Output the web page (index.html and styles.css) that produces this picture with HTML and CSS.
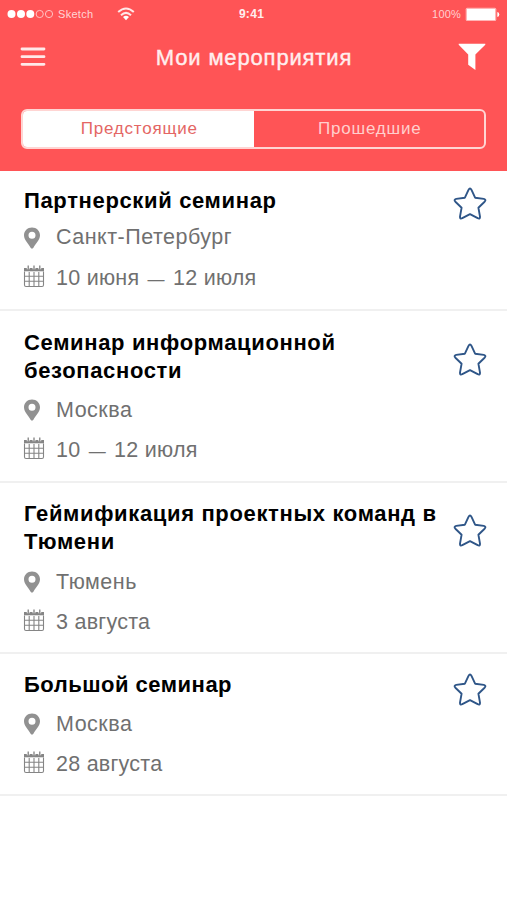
FILE: index.html
```html
<!DOCTYPE html>
<html lang="ru">
<head>
    <meta charset="UTF-8">
    <meta name="viewport" content="width=device-width, initial-scale=1.0">
    <title>Мои мероприятия</title>
    <link rel="stylesheet" href="styles.css">
</head>
<body>
    <!-- shared icons -->
    <svg width="0" height="0" class="sprite">
        <symbol id="pin" viewBox="0 0 18 22">
            <path fill-rule="evenodd" d="M9 0.5C4.4 0.5 1 4 1 8.3C1 13.5 5.6 16.5 7.6 20.8C8 21.9 10 21.9 10.4 20.8C12.4 16.5 17 13.5 17 8.3C17 4 13.6 0.5 9 0.5ZM9 4.7A3.5 3.5 0 1 1 9 11.7A3.5 3.5 0 1 1 9 4.7Z"/>
        </symbol>
        <symbol id="calendar" viewBox="0 0 22 23">
            <path d="M1.5 6.5V20a1.5 1.5 0 0 0 1.5 1.5H19a1.5 1.5 0 0 0 1.5-1.5V6.5M1.5 11.3H20.5M1.5 16.2H20.5M6.2 7V21.5M11 7V21.5M15.8 7V21.5" fill="none" stroke="#858585" stroke-width="1.1"/>
            <path d="M1 3H21V6.3H1Z" fill="#858585"/>
            <path d="M5.2 .8V4.3M16.8 .8V4.3M11 .8V4.3" stroke="#fff" stroke-width="2.8"/>
            <path d="M5.2 .5V4.5M11 .5V4.5M16.8 .5V4.5" stroke="#777" stroke-width="1.2"/>
        </symbol>
        <symbol id="star" viewBox="0 0 36 36">
            <path d="M16.5 3.9Q18 1.1 19.5 3.9L23.1 11.7L31.8 12.9Q34.6 13.6 32.6 15.7L26.4 21.7L28 30.7Q28.2 33.3 25.7 32.2L18 28.1L10.3 32.2Q7.8 33.3 8 30.7L9.6 21.7L3.4 15.7Q1.4 13.6 4.2 12.9L12.9 11.7Z" fill="none" stroke="#2f5688" stroke-width="1.9" stroke-linejoin="round"/>
        </symbol>
    </svg>

    <header class="header">
        <div class="status-bar">
            <div class="status-left">
                <svg class="signal" width="46" height="10" viewBox="0 0 46 10">
                    <g fill="#fff"><circle cx="4.5" cy="5" r="4"/><circle cx="14" cy="5" r="4"/><circle cx="23.3" cy="5" r="4"/></g>
                    <g fill="none" stroke="#ffc3c3"><circle cx="32.7" cy="5" r="3.6"/><circle cx="42" cy="5" r="3.6"/></g>
                </svg>
                <span class="carrier">Sketch</span>
                <svg class="wifi" width="18" height="14" viewBox="0 0 18 14">
                    <path d="M1.2 5Q9-2 16.8 5M4 8.2Q9 3.5 14 8.2" fill="none" stroke="#ffe8e8" stroke-width="2"/>
                    <path d="M6 10.1Q9 7.6 12 10.1L9 13.3Z" fill="#fff"/>
                </svg>
            </div>
            <div class="time">9:41</div>
            <div class="status-right">
                <span class="percent">100%</span>
                <svg width="35" height="15" viewBox="0 0 35 15">
                    <rect x=".7" y=".7" width="30.6" height="13.4" rx="1.5" fill="#ffb5b5"/>
                    <rect x="2" y="2" width="28" height="11" fill="#fff"/>
                    <path d="M32.3 5Q34.3 5.2 34.3 7.5T32.3 10Z" fill="#fff"/>
                </svg>
            </div>
        </div>
        <div class="nav-bar">
            <svg class="menu" width="26" height="22" viewBox="0 0 26 22">
                <path d="M2 3H24M2 10.7H24M2 18.3H24" stroke="#ffe9e9" stroke-width="2.8" stroke-linecap="round"/>
            </svg>
            <h1>Мои мероприятия</h1>
            <svg class="filter" width="28" height="28" viewBox="0 0 28 28">
                <path d="M.7.7H27.3V1.8L17.4 11.6V27L10.2 21.7V11.6L.7 1.8Z" fill="#fff"/>
            </svg>
        </div>
        <div class="tabs">
            <div class="tab active">Предстоящие</div>
            <div class="tab">Прошедшие</div>
        </div>
    </header>

    <main class="events">
        <div class="event first">
            <div class="event-head">
                <h2>Партнерский семинар</h2>
                <svg class="star"><use href="#star"/></svg>
            </div>
            <div class="row place"><svg class="pin"><use href="#pin"/></svg><span>Санкт-Петербург</span></div>
            <div class="row date"><svg class="calendar"><use href="#calendar"/></svg><span>10 июня <span class="dash">—</span> 12 июля</span></div>
        </div>
        <div class="event second">
            <div class="event-head">
                <h2>Семинар информационной безопасности</h2>
                <svg class="star"><use href="#star"/></svg>
            </div>
            <div class="row place"><svg class="pin"><use href="#pin"/></svg><span>Москва</span></div>
            <div class="row date"><svg class="calendar"><use href="#calendar"/></svg><span>10 <span class="dash">—</span> 12 июля</span></div>
        </div>
        <div class="event third">
            <div class="event-head">
                <h2>Геймификация проектных команд в Тюмени</h2>
                <svg class="star"><use href="#star"/></svg>
            </div>
            <div class="row place"><svg class="pin"><use href="#pin"/></svg><span>Тюмень</span></div>
            <div class="row date"><svg class="calendar"><use href="#calendar"/></svg><span>3 августа</span></div>
        </div>
        <div class="event last">
            <div class="event-head">
                <h2>Большой семинар</h2>
                <svg class="star"><use href="#star"/></svg>
            </div>
            <div class="row place"><svg class="pin"><use href="#pin"/></svg><span>Москва</span></div>
            <div class="row date"><svg class="calendar"><use href="#calendar"/></svg><span>28 августа</span></div>
        </div>
    </main>
</body>
</html>
```
FILE: styles.css
```css
* {
    box-sizing: border-box;
}
body {
    margin: 0;
    font-family: 'Liberation Sans', Arial, sans-serif;
    background-color: #fff;
    color: #000;
}
svg {
    display: block;
    flex-shrink: 0;
}
.sprite {
    position: absolute;
}
.header {
    height: 171px;
    background-color: #ff5456;
    color: #fff;
}
.status-bar {
    height: 28px;
    padding: 0 7px;
    display: grid;
    grid-template-columns: 1fr auto 1fr;
    align-items: center;
    font-size: 11px;
}
.status-left,
.status-right {
    display: flex;
    align-items: center;
}
.status-right {
    justify-content: flex-end;
    gap: 4px;
}
.carrier {
    margin-left: 5px;
    color: #ffd5d5;
    letter-spacing: 0.3px;
}
.wifi {
    margin-left: 24px;
}
.time {
    margin-right: 4px;
    font-size: 12px;
    font-weight: bold;
    letter-spacing: 0.3px;
    color: #ffeeee;
}
.percent {
    color: #ffd0d0;
    letter-spacing: 0.2px;
}
.nav-bar {
    height: 58px;
    padding: 0 21px 0 20px;
    display: flex;
    align-items: center;
    justify-content: space-between;
}
.nav-bar h1 {
    margin: 0;
    padding: 2px 0 0 4px;
    font-size: 22px;
    font-weight: normal;
    color: #ffeeee;
    letter-spacing: 0.85px;
    -webkit-text-stroke: 0.4px #ffeeee;
}
.tabs {
    height: 40px;
    margin: 23px 21px 0;
    display: flex;
    border: 2px solid #ffd5d3;
    border-radius: 6px;
    overflow: hidden;
}
.tab {
    width: 50%;
    padding-left: 2px;
    display: flex;
    align-items: center;
    justify-content: center;
    font-size: 17px;
    letter-spacing: 0.8px;
    color: #ffcfcd;
}
.tab.active {
    background-color: #fff;
    color: #e46664;
}
.event {
    height: 171px;
    padding: 18px 19px 0 24px;
    border-bottom: 2px solid #f0f0f0;
}
.event.first {
    height: 140px;
    padding-top: 16px;
}
.event.second {
    height: 172px;
}
.event.third {
    padding-top: 17px;
}
.event.last {
    height: 142px;
    padding-top: 17px;
}
.event-head {
    display: flex;
    justify-content: space-between;
    align-items: center;
    margin-bottom: 5px;
}
.third .event-head {
    margin-bottom: 6px;
}
.event.first .event-head {
    margin-bottom: 2px;
}
.event-head h2 {
    margin: 0 -8px 0 0;
    font-size: 22px;
    line-height: 28px;
    font-weight: bold;
    letter-spacing: 0.65px;
}
.last .event-head h2 {
    letter-spacing: 0.5px;
}
.star {
    width: 36px;
    height: 36px;
    margin: -4px 0;
    position: relative;
    top: 3px;
}
.last .star {
    top: 5px;
}
.row {
    height: 40px;
    display: flex;
    align-items: center;
    font-size: 21.5px;
    color: #707070;
}
.first .date {
    height: 42px;
}
.place {
    letter-spacing: 0.5px;
}
.date {
    letter-spacing: 0.25px;
}
.dash {
    margin: 0 2px;
    font-size: 17px;
}
.pin {
    width: 18px;
    height: 22px;
    margin-right: 15px;
    margin-left: -1px;
    fill: #919191;
}
.first .pin {
    margin-top: 2px;
}
.calendar {
    width: 22px;
    height: 23px;
    margin: -4px 11px 0 -1px;
}
```
